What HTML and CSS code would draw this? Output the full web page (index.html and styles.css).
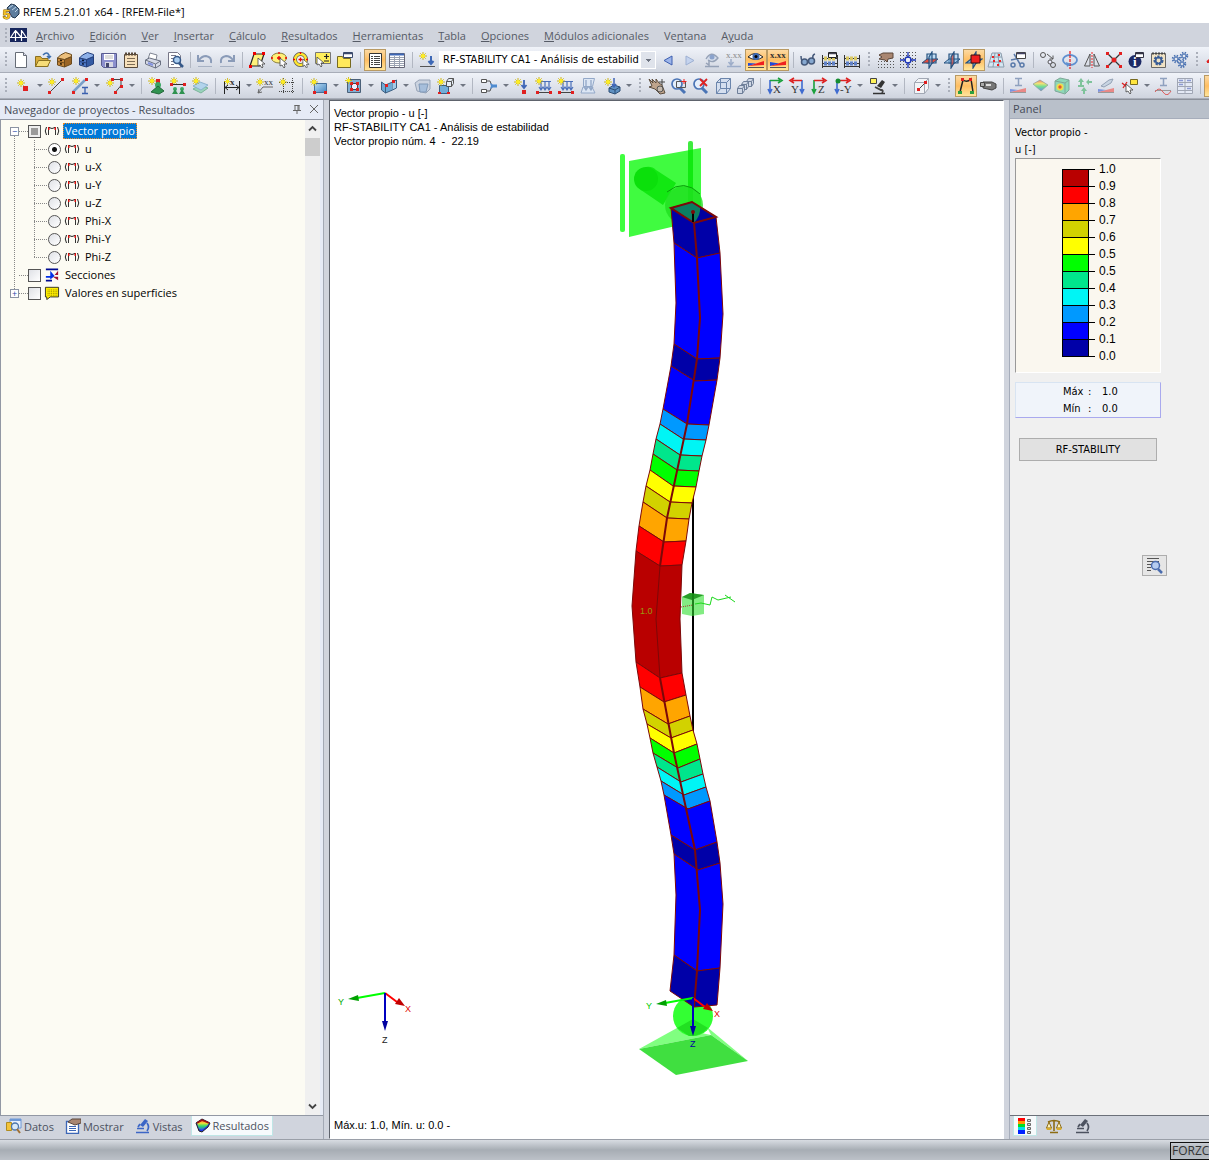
FILE: index.html
```
<!DOCTYPE html>
<html lang="es">
<head>
    <meta charset="UTF-8">
    <title>RFEM 5.21.01 x64 - [RFEM-File*]</title>
    <link rel="stylesheet" href="styles.css">
</head>
<body>

<!-- icon sprite -->
<svg class="sprite" aria-hidden="true">
    <defs>
        <linearGradient id="gBlue" x1="0" y1="0" x2="1" y2="1"><stop offset="0" stop-color="#b9dcf5"/><stop offset="1" stop-color="#4484bd"/></linearGradient>
        <linearGradient id="gRain" x1="0" y1="0" x2="0" y2="1"><stop offset="0" stop-color="#e33"/><stop offset=".3" stop-color="#fd3"/><stop offset=".6" stop-color="#3d6"/><stop offset="1" stop-color="#35e"/></linearGradient>
    </defs>
    <symbol id="star" viewBox="0 0 9 9"><path d="M4.500 0v9M0 4.500h9M1.500 1.500l6 6M7.500 1.500l-6 6" stroke="#c9b000"/><circle cx="4.500" cy="4.500" r="2.300" fill="#ffee20"/></symbol>
    <symbol id="app" viewBox="0 0 18 18"><path d="M5 5l4-4 4 1 4 4v5l-4 4-3-1z" fill="#5d7d9e" stroke="#24384e"/><path d="M7 5l4-3M10 7l4-3M13 9l3-3" stroke="#bcd3e6"/></symbol>
    <symbol id="bridge" viewBox="0 0 17 14"><path d="M0 0h17v14H0z" fill="#17265c"/><path d="M0 9.500h17M5.500 2v11M11.500 2v11M5 3L1 9M6 3l5 6M12 3l4 6" stroke="#fff" stroke-width="1.200" fill="none"/></symbol>
    <symbol id="new" viewBox="0 0 18 18"><path d="M3.500 1.500h8l3 3v12h-11z" fill="#fff" stroke="#666c76"/><path d="M11.500 1.500v3h3" fill="#dde" stroke="#666c76"/></symbol>
    <symbol id="open" viewBox="0 0 18 18"><path d="M1.500 15.500v-10h5l1.500 2h6v8z" fill="#d9ac3a" stroke="#8a7020"/><path d="M1.500 15.500l3-6h12l-3 6z" fill="#f6dc78" stroke="#8a7020"/><path d="M9 4q4-4 6 0v3M13 5l2 2 2-2" fill="none" stroke="#3d6fae" stroke-width="1.500"/></symbol>
    <symbol id="boxA" viewBox="0 0 18 18"><path d="M1.500 7l7 1.500V16l-7-2z" fill="#c98a3c" stroke="#6b4a1c"/><path d="M8.500 8.500l7-3v7.500l-7 3z" fill="#9a6526" stroke="#6b4a1c"/><path d="M1.500 7l3-3 5-2.500 6 2v2l-7 3z" fill="#ecbf7c" stroke="#6b4a1c"/><path d="M1.500 10.500l7 1.500" stroke="#6b4a1c"/><path d="M4 9.200l2 .4M4 12.700l2 .4" stroke="#221505" stroke-width="1.400"/></symbol>
    <symbol id="boxB" viewBox="0 0 18 18"><path d="M1.500 7l7 1.500V16l-7-2z" fill="#4d79c6" stroke="#243f7c"/><path d="M8.500 8.500l7-3v7.500l-7 3z" fill="#345ba4" stroke="#243f7c"/><path d="M1.500 7l3-3 5-2.500 6 2v2l-7 3z" fill="#8db0e8" stroke="#243f7c"/><path d="M1.500 10.500l7 1.500" stroke="#243f7c"/><path d="M4 9.200l2 .4M4 12.700l2 .4" stroke="#0a1430" stroke-width="1.400"/></symbol>
    <symbol id="save" viewBox="0 0 18 18"><path d="M1.500 2.500h15v14h-13l-2-2z" fill="#8c90ce" stroke="#5a5d90"/><path d="M4 3h10v6H4z" fill="#fff"/><path d="M5 5h8M5 7h8" stroke="#bbb"/><path d="M5 11h8v5H5z" fill="#d8d8e4"/><path d="M6 12h3v4H6z" fill="#44486e"/></symbol>
    <symbol id="notes" viewBox="0 0 18 18"><path d="M2.500 3.500h13v13h-13z" fill="#f7e0bb" stroke="#58493a"/><path d="M3 3h12" stroke="#58493a" stroke-width="3" stroke-dasharray="2 1"/><path d="M5 7.500h8M5 10.500h8M5 13.500h8" stroke="#7d6c55"/></symbol>
    <symbol id="print" viewBox="0 0 18 18"><path d="M4 8L6 2l7 2-1 5z" fill="#fff" stroke="#808694"/><path d="M1.500 9l4-2 11 3v4l-5 3-10-4z" fill="#d6dae6" stroke="#6a7182"/><path d="M1.500 9l10 4 5-3M11.500 13v4" fill="none" stroke="#6a7182"/><path d="M4 12l5 2" stroke="#8493e0" stroke-width="2"/></symbol>
    <symbol id="preview" viewBox="0 0 18 18"><path d="M2.500 1.500h9l3 3v12h-12z" fill="#fff" stroke="#778"/><path d="M5 4.500h5M5 7.500h3M5 10.500h2M5 13.500h3" stroke="#778"/><circle cx="11" cy="9" r="3.500" fill="#a9cdf0" stroke="#36598a" stroke-width="1.500"/><path d="M13 12l4 4" stroke="#36598a" stroke-width="2.500"/></symbol>
    <symbol id="undo" viewBox="0 0 18 18"><path d="M2 4v6h6M3 9q3-4 7-4 6 1 5 7" fill="none" stroke="#8a9bb8" stroke-width="2"/><path d="M2 15.500h14" stroke="#a8b2c4"/></symbol>
    <symbol id="redo" viewBox="0 0 18 18"><path d="M16 4v6h-6M15 9q-3-4-7-4-6 1-5 7" fill="none" stroke="#8a9bb8" stroke-width="2"/><path d="M2 15.500h14" stroke="#a8b2c4"/></symbol>
    <symbol id="cursor" viewBox="0 0 9 10"><path d="M1 0v8l2-1 2 3 1-1-1-3h3z" fill="#fff" stroke="#444" stroke-width=".8"/></symbol>
    <symbol id="selRhomb" viewBox="0 0 18 18"><path d="M2 15L6 3h10l-4 12z" fill="#fff27a" stroke="#222" stroke-width="1.200"/><path d="M1 14h3v3H1zM5 1h3v3H5zM14 1h3v3h-3z" fill="#e00"/><use href="#cursor" x="9" y="7" width="9" height="10"/></symbol>
    <symbol id="selEll" viewBox="0 0 18 18"><ellipse cx="9" cy="7" rx="7.500" ry="5" fill="#ffef78" stroke="#8a7f3a"/><path d="M7 7h4M9 5v4M1 7h2M9 1v2M15 7h2" stroke="#e00" stroke-width="1.300"/><use href="#cursor" x="9" y="7" width="9" height="10"/></symbol>
    <symbol id="selRing" viewBox="0 0 18 18"><circle cx="8.500" cy="8.500" r="5.500" fill="#f5f5f5" stroke="#555" stroke-width="4"/><circle cx="8.500" cy="8.500" r="5.500" fill="none" stroke="#ffe630" stroke-width="2.500"/><path d="M6.500 8.500h4M8.500 6.500v4M8.500 1v2M1 8.500h2M14 8.500h2" stroke="#e00" stroke-width="1.300"/><use href="#cursor" x="10" y="8" width="8" height="9"/></symbol>
    <symbol id="selPm" viewBox="0 0 18 18"><path d="M1.500 1.500h15v11h-15z" fill="#ffef5c" stroke="#777"/><path d="M12.500 3v5M10 5.500h5M10 10h5" stroke="#222" stroke-width="1.200"/><use href="#cursor" x="2" y="6" width="9" height="10"/></symbol>
    <symbol id="selTab" viewBox="0 0 18 18"><path d="M1.500 5.500h5l1 2h7v9h-13z" fill="#ffe95c" stroke="#776a20"/><path d="M7.500 1.500h9v5h-9z" fill="#fff" stroke="#3b4a6c"/><path d="M8 2.500h8" stroke="#3b4a6c" stroke-width="1.500"/></symbol>
    <symbol id="list" viewBox="0 0 18 18"><path d="M3.500 2.500h12v14h-12z" fill="#fff" stroke="#333"/><path d="M5 5.500h2M5 7.500h2M5 9.500h2M5 11.500h2M5 13.500h2M8 5.500h6M8 7.500h6M8 9.500h6M8 11.500h6M8 13.500h6" stroke="#444"/></symbol>
    <symbol id="table" viewBox="0 0 18 18"><path d="M1.500 2.500h15v14h-15z" fill="#fff" stroke="#667"/><path d="M2 3.500h14" stroke="#3c66b6" stroke-width="2"/><path d="M2 6.500h14M2 8.500h14M2 10.500h14M2 12.500h14M2 14.500h14M6.500 5v11M11.500 5v11" stroke="#9aa2b2"/></symbol>
    <symbol id="loadcase" viewBox="0 0 18 18"><use href="#star" x="1" y="1" width="8" height="8"/><path d="M13 5v7M10.500 10l2.500 3 2.500-3" fill="none" stroke="#3d68b6" stroke-width="2"/><path d="M2 15.500h15" stroke="#555"/></symbol>
    <symbol id="prev" viewBox="0 0 18 18"><path d="M13 5v9L5 9.500z" fill="#9db5ea" stroke="#3d5fb0"/></symbol>
    <symbol id="next" viewBox="0 0 18 18"><path d="M5 5v9l8-4.500z" fill="#c4d3ee" stroke="#9db0d2"/></symbol>
    <symbol id="eyeGrey" viewBox="0 0 18 18"><path d="M3 8q5-9 12-1-5 6-10 2" fill="#d4dcea" stroke="#95a1b6" stroke-width="1.300"/><circle cx="9" cy="6" r="2.500" fill="#8aa2cc"/><path d="M6 9v5l-3-2M2 15.500h14" fill="none" stroke="#95a1b6" stroke-width="1.500"/></symbol>
    <symbol id="xxxGrey" viewBox="0 0 18 18"><path d="M6 8v6M3.500 11L6 14l2.500-3M2 15.500h14" fill="none" stroke="#9dadc9" stroke-width="1.500"/></symbol>
    <symbol id="eye" viewBox="0 0 18 18"><path d="M1 6q7-7 15 0-7 5-15 0z" fill="#fff" stroke="#222"/><circle cx="9" cy="5.500" r="3.500" fill="#3e69b1"/><circle cx="9" cy="5.500" r="1.500"/><path d="M1 15l16-5v4z" fill="#ef2020"/><path d="M1 12v3l8-2.500z" fill="#1f49d8"/><path d="M1 16.500h16" stroke="#555"/></symbol>
    <symbol id="xxx" viewBox="0 0 18 18"><path d="M1 15l16-5v4z" fill="#ef2020"/><path d="M1 11v4l9-2.500z" fill="#1f49d8"/><path d="M1 16.500h16" stroke="#555"/></symbol>
    <symbol id="glasses" viewBox="0 0 18 18"><path d="M2 5q0 3 1 5M16 3q-3 1-2 5" stroke="#45597a" stroke-width="1.500" fill="none"/><circle cx="5.500" cy="11" r="3" fill="#86a8d0" stroke="#45597a" stroke-width="1.500"/><circle cx="12.500" cy="10" r="3" fill="#86a8d0" stroke="#45597a" stroke-width="1.500"/></symbol>
    <symbol id="abacus" viewBox="0 0 18 18"><path d="M1.500 4v13M16.500 4v13M1 7.500h16M1 12.500h16M1 15.500h16" stroke="#333"/><path d="M3 7.500h12" stroke="#d9c862" stroke-width="4" stroke-dasharray="3 1"/><path d="M3 12.500h12" stroke="#5f80c6" stroke-width="4" stroke-dasharray="3 1"/></symbol>
    <symbol id="abacusWin" viewBox="0 0 18 18"><use href="#abacus" width="18" height="18"/><path d="M7.500 1.500h8v5h-8z" fill="#fff" stroke="#222"/><path d="M8 2.500h7" stroke="#445" stroke-width="1.500"/></symbol>
    <symbol id="handGrid" viewBox="0 0 18 18"><path d="M1 10.500h16M1 13.500h16M1 16.500h16" stroke="#555" stroke-dasharray="1 2"/><path d="M2 4l4-2h10v5l-5 1-1 3-2-2-6-1 3-2z" fill="#a98671" stroke="#5b473b"/></symbol>
    <symbol id="snap" viewBox="0 0 18 18"><path d="M1 1.500h16M1 4.500h16M1 7.500h16M1 10.500h16M1 13.500h16M1 16.500h16" stroke="#555" stroke-dasharray="1 2"/><circle cx="9" cy="9" r="3" fill="#eef1f8" stroke="#1c35b6" stroke-width="1.300"/><path d="M9 1v6M9 11v6M1 9h6M11 9h6" stroke="#1c35b6" stroke-width="1.300"/></symbol>
    <symbol id="planeXY" viewBox="0 0 18 18"><path d="M6 3h9v9H6z" fill="#c2dcf2" stroke="#25517f" stroke-width="1.200"/><path d="M1 12l5-4h11l-5 4z" fill="#e34b3c" stroke="#25517f"/><path d="M8 6l3-5v11l-3 5z" fill="#81b8e2" fill-opacity=".5" stroke="#25517f" stroke-width="1.200"/></symbol>
    <symbol id="planeYZ" viewBox="0 0 18 18"><path d="M6 3h9v9H6z" fill="#c2dcf2" stroke="#25517f" stroke-width="1.200"/><path d="M1 12l5-4h11l-5 4z" fill="#81b8e2" fill-opacity=".6" stroke="#25517f"/><path d="M8 6l3-5v11l-3 5z" fill="#c8534e" fill-opacity=".8" stroke="#25517f" stroke-width="1.200"/></symbol>
    <symbol id="planeXZ" viewBox="0 0 18 18"><path d="M1 12l5-4h11l-5 4z" fill="#81b8e2" stroke="#25517f" stroke-width="1.200"/><path d="M8 6l3-5v11l-3 5z" fill="#81b8e2" stroke="#25517f" stroke-width="1.200"/><path d="M6 4h9v8H6z" fill="#ef2020" stroke="#311"/></symbol>
    <symbol id="gridPts" viewBox="0 0 18 18"><path d="M5 2h9l3 14H1z" fill="#d5e7f3" stroke="#8b9cac"/><path d="M4 6h11M3 11h13M8 2L6 16M11 2l1 14" stroke="#8b9cac"/><path d="M5 5h2v2H5zM11 3h2v2h-2zM6 9h2v2H6zM12 9h2v2h-2zM10 13h2v2h-2z" fill="#e22"/></symbol>
    <symbol id="scissors" viewBox="0 0 18 18"><path d="M5 3l6 10M2 9l10-2" stroke="#5a7aaa" stroke-width="1.500"/><circle cx="4" cy="14" r="2" fill="none" stroke="#5a7aaa" stroke-width="1.500"/><circle cx="13" cy="14" r="2" fill="none" stroke="#5a7aaa" stroke-width="1.500"/><path d="M7.500 1.500h9v6h-9z" fill="#fff" stroke="#444"/><path d="M8 2.500h8" stroke="#446" stroke-width="1.500"/></symbol>
    <symbol id="copyMove" viewBox="0 0 18 18"><circle cx="4" cy="4" r="2.500" fill="none" stroke="#555"/><circle cx="14" cy="14" r="2.500" fill="none" stroke="#555"/><path d="M8 3l6 5M10.500 8H14V4.500" fill="none" stroke="#555"/><circle cx="11" cy="11" r="2" fill="#eef" stroke="#555"/></symbol>
    <symbol id="rotate" viewBox="0 0 18 18"><ellipse cx="9" cy="9" rx="7" ry="5" fill="none" stroke="#5f90d0" stroke-width="1.800"/><path d="M9 0v18" stroke="#e22" stroke-width="1.300" stroke-dasharray="3 1"/><path d="M5 11l1 5 4-3z" fill="#5f90d0"/></symbol>
    <symbol id="mirror" viewBox="0 0 18 18"><path d="M7 3v12H1.500zM11 3v12h5.500z" fill="none" stroke="#555"/><path d="M9 1v16" stroke="#e22" stroke-dasharray="2 1"/></symbol>
    <symbol id="cross" viewBox="0 0 18 18"><path d="M2 2l14 14M16 2L2 16" stroke="#333" stroke-width="1.300"/><path d="M1 1h3v3H1zM14 1h3v3h-3zM1 14h3v3H1zM14 14h3v3h-3z" fill="#e32020"/><circle cx="9" cy="9" r="2.500" fill="#e32020"/></symbol>
    <symbol id="info" viewBox="0 0 18 18"><circle cx="8" cy="10.500" r="6.500" fill="#1d2a66"/><path d="M8.500 1.500h8v5h-8z" fill="#fff" stroke="#334"/><path d="M9 2.500h7" stroke="#334" stroke-width="1.500"/></symbol>
    <symbol id="doc" viewBox="0 0 18 18"><path d="M2.500 2.500h14v14h-14z" fill="#f0e2c4" stroke="#666"/><path d="M3 2.500h13" stroke="#444" stroke-width="2" stroke-dasharray="2 1"/><circle cx="9.500" cy="9.500" r="3.500" fill="none" stroke="#385c96" stroke-width="3" stroke-dasharray="2 1"/><circle cx="9.500" cy="9.500" r="3" fill="none" stroke="#385c96" stroke-width="1.500"/></symbol>
    <symbol id="gears" viewBox="0 0 18 18"><g fill="none" stroke="#4a72b2"><g stroke-width="2.500" stroke-dasharray="1.200 1.200"><circle cx="5" cy="8" r="3"/><circle cx="13" cy="5" r="3"/><circle cx="11" cy="13" r="3"/></g><circle cx="5" cy="8" r="2"/><circle cx="13" cy="5" r="2"/><circle cx="11" cy="13" r="2"/></g></symbol>
    <symbol id="redArrow" viewBox="0 0 18 18"><path d="M2 11L10 4M2 11h6" stroke="#d22" stroke-width="2"/></symbol>

    <symbol id="node" viewBox="0 0 18 18"><use href="#star" x="3" y="2" width="8" height="8"/><path d="M9 9h5v5H9z" fill="#e02020"/></symbol>
    <symbol id="line" viewBox="0 0 18 18"><use href="#star" x="1" y="1" width="8" height="8"/><path d="M3 15L15 3" stroke="#444"/><path d="M1 14h3v3H1zM14 1h3v3h-3z" fill="#e02020"/></symbol>
    <symbol id="member" viewBox="0 0 18 18"><use href="#star" x="1" y="0" width="8" height="8"/><path d="M2 15L14 3" stroke="#7b9fc8" stroke-width="2.500"/><path d="M14 1h3v3h-3zM1 14h3v3H1z" fill="#e02020"/><path d="M11 10.500h6M11 16.500h6M14 10v7" stroke="#3a5fae" stroke-width="1.300"/></symbol>
    <symbol id="polyline" viewBox="0 0 18 18"><use href="#star" x="0" y="2" width="8" height="8"/><path d="M7 2.500h8v6l-5 6" fill="none" stroke="#444"/><path d="M5 1h3v3H5zM14 1h3v3h-3zM14 8h3v3h-3zM8 14h3v3H8z" fill="#e02020"/></symbol>
    <symbol id="support" viewBox="0 0 18 18"><use href="#star" x="1" y="0" width="8" height="8"/><path d="M9 2h4v4H9z" fill="#e02020"/><circle cx="11" cy="8" r="3" fill="#3aa864"/><path d="M11 9l6 5-5 3-8-2z" fill="#2f9250" stroke="#23683a"/></symbol>
    <symbol id="lineSupport" viewBox="0 0 18 18"><use href="#star" x="1" y="0" width="8" height="8"/><path d="M2 7.500h14" stroke="#333"/><path d="M1 6h3v3H1zM14 6h3v3h-3z" fill="#e02020"/><circle cx="6" cy="12" r="2" fill="#3aa864"/><circle cx="13" cy="12" r="2" fill="#3aa864"/><path d="M6 12l3 5H3zM13 12l3 5h-6z" fill="#2f9250"/></symbol>
    <symbol id="surfSupport" viewBox="0 0 18 18"><path d="M2 12l7-4 8 3-7 5z" fill="#9ad4ba" stroke="#7cb49c"/><path d="M2 9l7-4 8 3-7 5z" fill="#b2d4ec" stroke="#8cb2cd"/><use href="#star" x="1" y="0" width="8" height="8"/></symbol>
    <symbol id="dim" viewBox="0 0 18 18"><path d="M1.500 4v13M16.500 4v13M2 10.500h14M5 8l-3 2.500L5 13M13 8l3 2.500-3 2.500" fill="none" stroke="#222"/><use href="#star" x="1" y="1" width="7" height="7"/></symbol>
    <symbol id="comment" viewBox="0 0 18 18"><path d="M2 16l5-6h10M2 16l1-4M2 16l4-1" fill="none" stroke="#666"/><use href="#star" x="0" y="1" width="8" height="8"/></symbol>
    <symbol id="section" viewBox="0 0 18 18"><path d="M5.500 1v16M14.500 1v16M1 5.500h16M1 14.500h16" stroke="#444" stroke-dasharray="1 1"/><use href="#star" x="1" y="1" width="8" height="8"/></symbol>
    <symbol id="surface" viewBox="0 0 18 18"><path d="M4.500 6.500h12v9h-12z" fill="url(#gBlue)" stroke="#456f9b"/><use href="#star" x="0" y="1" width="8" height="8"/><path d="M3 14h3v3H3zM14 14h3v3h-3z" fill="#e02020"/></symbol>
    <symbol id="opening" viewBox="0 0 18 18"><path d="M2.500 2.500h13v13h-13z" fill="#84aed2" stroke="#4a6078"/><path d="M6.500 6.500h6v6h-6z" fill="#eef" stroke="#445"/><path d="M5 5h3v3H5zM11 5h3v3h-3zM5 11h3v3H5zM11 11h3v3h-3z" fill="#e02020"/><use href="#star" x="0" y="0" width="7" height="7"/></symbol>
    <symbol id="solid" viewBox="0 0 18 18"><path d="M1.500 5l4 3v8l-4-3zM5.500 8l7-3v8l-7 3z" fill="#6fa9d4" stroke="#3c5f82"/><path d="M12.500 5l4-2v8l-4 2" fill="#a4cbe8" stroke="#3c5f82"/><path d="M5 7h3v3H5zM12 3h3v3h-3z" fill="#e02020"/></symbol>
    <symbol id="solid2" viewBox="0 0 18 18"><path d="M2 6l4-3h11v9l-4 4-9-2z" fill="#cbd3e0" stroke="#97a3b6"/><path d="M6 7h9l-2 8H7z" fill="#a6bedb" stroke="#8099b8"/></symbol>
    <symbol id="solidSet" viewBox="0 0 18 18"><path d="M2.500 8.500h9v8h-9z" fill="#74add8" stroke="#3c5f82"/><path d="M9.500 4.500h5v5h-5zM9.500 4.500l2-3h5v5l-2 3M14.500 4.500l2-3" fill="#e6edf5" stroke="#555"/><use href="#star" x="0" y="1" width="8" height="8"/><path d="M1 15h3v2H1zM10 15h3v2h-3z" fill="#e02020"/></symbol>
    <symbol id="connect" viewBox="0 0 18 18"><path d="M1.500 2.500h5v3h-5zM1.500 12.500h5v3h-5z" fill="#fff" stroke="#555"/><path d="M7 4h3l2 5-2 5H7" fill="none" stroke="#555"/><path d="M10 6l3 1.500h4v3h-4L10 12l1-3z" fill="#4f8bd0"/></symbol>
    <symbol id="nodeLoad" viewBox="0 0 18 18"><use href="#star" x="1" y="1" width="8" height="8"/><path d="M11 3v8M8.500 8L11 11l2.500-3" fill="none" stroke="#3f66b6" stroke-width="1.800"/><path d="M9 13h4v4H9z" fill="#e02020"/></symbol>
    <symbol id="lineLoad" viewBox="0 0 18 18"><path d="M3 4.500h13M6 5v8M10 5v8M14 5v8M4 10l2 3 2-3 2 3 2-3 2 3 2-3" fill="none" stroke="#4a6fba" stroke-width="1.200"/><path d="M2 15.500h14" stroke="#444"/><path d="M1 14h3v3H1zM14 14h3v3h-3z" fill="#e02020"/><use href="#star" x="0" y="0" width="8" height="8"/></symbol>
    <symbol id="freeLoad" viewBox="0 0 18 18"><path d="M4.500 1.500h11l-2 8h-9zM4 10h9l3 6H2z" fill="#dce6f4" stroke="#93a8c8"/><path d="M7 3v9M12 3v9M5 10l2 3 2-3M10 10l2 3 2-3" fill="none" stroke="#93a8c8" stroke-width="1.300"/></symbol>
    <symbol id="genLoad" viewBox="0 0 18 18"><path d="M6 11l5-3 6 2v4l-5 3-6-2z" fill="#5f91c2" stroke="#2d4f76"/><path d="M6 11l6 2 5-3M12 13v4" stroke="#2d4f76" fill="none"/><path d="M11 1v8M9 7l2 3 2-3" fill="none" stroke="#3f66b6" stroke-width="1.500"/><use href="#star" x="1" y="1" width="8" height="8"/></symbol>
    <symbol id="pan" viewBox="0 0 18 18"><path d="M1 2l4 4-1-4 4 4V2l3 4 3 2 3 8-5 1-5-5-6-2 3-1z" fill="#bfa48c" stroke="#5c4d3e"/><path d="M14 2v6M11 5h6" stroke="#444"/><circle cx="12" cy="12" r="3" fill="#ccc" fill-opacity=".5" stroke="#555"/></symbol>
    <symbol id="zoomWin" viewBox="0 0 18 18"><circle cx="7" cy="7" r="5" fill="#e4eefa" stroke="#4a74b5" stroke-width="1.700"/><path d="M10 11l5 5" stroke="#4a74b5" stroke-width="3"/><path d="M6.500 4.500h9v6h-9z" fill="none" stroke="#555"/><path d="M14 2v5M11.500 4.500h5" stroke="#e22"/></symbol>
    <symbol id="zoomAll" viewBox="0 0 18 18"><circle cx="7" cy="7" r="5" fill="#e4eefa" stroke="#4a74b5" stroke-width="1.700"/><path d="M10 11l5 5" stroke="#4a74b5" stroke-width="3"/><path d="M8 2l7 7M15 2L8 9" stroke="#d22" stroke-width="1.800"/></symbol>
    <symbol id="cube" viewBox="0 0 18 18"><path d="M2.500 5.500l4-4h10v10l-4 5h-10z" fill="#d5dfef"/><path d="M2.500 5.500h10v11h-10zM2.500 5.500l4-4h10l-4 4M16.500 1.500v10l-4 5M6.500 1.500v10h10M6.500 11.500l-4 5" fill="none" stroke="#6b85ac"/></symbol>
    <symbol id="cubes" viewBox="0 0 18 18"><g id="box3" fill="#cfd7e5" stroke="#6f7f99"><path d="M10.500 4.500l2-3h5v5l-2 3z"/><path d="M10.500 4.500h5v5h-5zM15.500 4.500l2-3"/></g><use href="#box3" x="-5" y="3"/><use href="#box3" x="-9" y="7"/></symbol>
    <symbol id="viewX" viewBox="0 0 18 18"><path d="M4 3v12M2 12l2 4 2-4" stroke="#3f6bd0" stroke-width="1.600" fill="none"/><path d="M4 3.500h10M12 1l4 2.500L12 6" stroke="#1ba03c" stroke-width="1.600" fill="none"/></symbol>
    <symbol id="viewY" viewBox="0 0 18 18"><path d="M14 3v12M12 12l2 4 2-4" stroke="#3f6bd0" stroke-width="1.600" fill="none"/><path d="M14 3.500H4M6 1L2 3.500 6 6" stroke="#d22" stroke-width="1.600" fill="none"/></symbol>
    <symbol id="viewZ" viewBox="0 0 18 18"><path d="M4 3v12M2 12l2 4 2-4" stroke="#1ba03c" stroke-width="1.600" fill="none"/><path d="M4 3.500h10M12 1l4 2.500L12 6" stroke="#d22" stroke-width="1.600" fill="none"/></symbol>
    <symbol id="viewMY" viewBox="0 0 18 18"><path d="M3 3v12M1 12l2 4 2-4" stroke="#3f6bd0" stroke-width="1.600" fill="none"/><path d="M4 3.500h10M12 1l4 2.500L12 6" stroke="#d22" stroke-width="1.600" fill="none"/><circle cx="4" cy="4" r="2.500" fill="#168d32"/></symbol>
    <symbol id="scope" viewBox="0 0 18 18"><path d="M13 3l3 2-4 6-4-2z" fill="#333"/><path d="M6 10l6 3q3 0 1 3" fill="none" stroke="#444" stroke-width="1.800"/><path d="M4 16.500h12" stroke="#333" stroke-width="1.500"/><path d="M1.500 1.500h6v5h-6z" fill="#fff35a" stroke="#444"/></symbol>
    <symbol id="clip" viewBox="0 0 18 18"><path d="M2.500 5.500l4-4h10v10l-4 5h-10z" fill="#f2f4f7" stroke="#a2a8b4"/><path d="M2.500 5.500h10v11M12.500 5.500l4-4" stroke="#a2a8b4" fill="none"/><path d="M6 13l8-8" stroke="#444"/><path d="M5 11h3v3H5zM12 4h3v3h-3z" fill="#e02020"/></symbol>
    <symbol id="frame" viewBox="0 0 18 18"><path d="M3 15L6 3q4 3 8-1l2 13" fill="none" stroke="#222" stroke-width="1.500"/><path d="M4 1h3v3H4zM12 1h3v3h-3z" fill="#e02020"/><path d="M1 14h4v3H1zM13 14h4v3h-4z" fill="#2ca042"/></symbol>
    <symbol id="camera" viewBox="0 0 18 18"><path d="M4 5h9l4 2v4l-4 2-9-2z" fill="#777" stroke="#444"/><path d="M1.500 5.500h4v4h-4z" fill="#aaa" stroke="#444"/><path d="M7 8h5" stroke="#ddd" stroke-width="2"/></symbol>
    <symbol id="resI" viewBox="0 0 18 18"><path d="M6 1.500h7M6 8.500h7M9.500 2v6" stroke="#8fa1bf" stroke-width="1.500"/><path d="M1 15l16-4v4z" fill="#e98987"/><path d="M1 12v3l8-2z" fill="#7b93df"/><path d="M1 15.500h16" stroke="#999"/></symbol>
    <symbol id="resSurf" viewBox="0 0 18 18"><path d="M2 7l7-4 8 5-7 6z" fill="url(#gRain)" fill-opacity=".65" stroke="#8a9f9a" stroke-width=".7"/></symbol>
    <symbol id="resSolid" viewBox="0 0 18 18"><path d="M2 4l5-3 9 2v10l-4 4-10-3z" fill="#8dd8b8" stroke="#7fa898"/><path d="M2 4l10 2v10M12 6l4-3" stroke="#7fa898" fill="none"/><circle cx="7" cy="10" r="3.500" fill="#f1dc4c"/><circle cx="7" cy="10" r="1.700" fill="#e4572f"/></symbol>
    <symbol id="resSup" viewBox="0 0 18 18"><path d="M6 1l3 4H7v3H5V5H3zM11 5l3-3v2h3v2h-3v2zM9 10l3 4h-2v3H8v-3H6z" fill="#7fc39b"/><path d="M3 9h6" stroke="#7fc39b" stroke-width="2"/></symbol>
    <symbol id="resPlane" viewBox="0 0 18 18"><path d="M4 9l8-6 4-1-2 4-7 4z" fill="#c8d4e2" stroke="#94a2b5"/><path d="M1 15l16-4v4z" fill="#e98987"/><path d="M1 12v3l8-2z" fill="#7b93df"/><path d="M1 15.500h16" stroke="#999"/></symbol>
    <symbol id="pick" viewBox="0 0 18 18"><path d="M9.500 2.500h7v5h-7z" fill="#ffe53d" stroke="#776a20"/><path d="M1 6l5 4M6 5l-4 6" stroke="#d22" stroke-width="1.300"/><use href="#cursor" x="4" y="7" width="9" height="10"/></symbol>
    <symbol id="wave" viewBox="0 0 18 18"><path d="M6 1.500h7M6 8.500h7M9.500 2v6" stroke="#8fa1bf" stroke-width="1.500"/><path d="M1 13.500h16" stroke="#999"/><path d="M1 15q4-6 8 0t8-1" fill="none" stroke="#dd5e5e"/></symbol>
    <symbol id="resTab" viewBox="0 0 18 18"><path d="M1.500 1.500h15v15h-15z" fill="#e4e9f5" stroke="#a0a6b4"/><path d="M2 5.500h14M2 9.500h14M2 13.500h14M9 1v15" stroke="#a0a6b4"/><path d="M3 3.500h4M11 3.500h4M3 7.500h4M11 11.500h4" stroke="#8c9ad2" stroke-width="1.500"/></symbol>

    <symbol id="mode" viewBox="0 0 16 12"><path d="M2.500 2Q0 6 2.500 10M13.500 2Q16 6 13.500 10" fill="none" stroke="#222"/><path d="M4.500 10V3M11.500 10V3" stroke="#333"/><path d="M4 2h1.500v3H4zM10.500 2H12v3h-1.500z" fill="#e01010"/><path d="M5 2.500l3 1 3-1" fill="none" stroke="#222"/></symbol>
    <symbol id="secc" viewBox="0 0 16 16"><path d="M1 1.500h14M1 14.500h7" stroke="#000a90" stroke-width="2"/><path d="M6 3v10l5-4zM1 9h5v2H1z" fill="#0030e8"/><path d="M15 3v5h-4zM9 10h6v4z" fill="#a01030"/></symbol>
    <symbol id="vals" viewBox="0 0 16 16"><path d="M.5 1.500h15v11H6l-4 3v-3H.5z" fill="#ffef00" stroke="#222"/><path d="M3 4.500h11M3 6.500h11M3 8.500h11M3 10.500h11" stroke="#8a7b00" stroke-dasharray="1 1"/></symbol>
    <symbol id="tabData" viewBox="0 0 16 16"><path d="M4 1h11v9H4z" fill="#e8f0fb" stroke="#6d98d6"/><path d="M4 2h11" stroke="#6d98d6" stroke-width="2"/><path d="M.5 4.500h5v8h-5z" fill="#f3c33a" stroke="#b08c20"/><circle cx="9" cy="8.500" r="3.500" fill="#d8e9f8" stroke="#4b76ad" stroke-width="1.300"/><path d="M11 11l3 4" stroke="#a07035" stroke-width="2"/></symbol>
    <symbol id="tabShow" viewBox="0 0 16 16"><path d="M1.500 3.500h12v12h-12z" fill="#fff" stroke="#3c66b6" stroke-width="1.300"/><path d="M4 8.500h7M4 10.500h7M4 12.500h7" stroke="#3c66b6"/><path d="M3 4l4-3h9v4l-6 2z" fill="#a98671" stroke="#5b473b"/></symbol>
    <symbol id="micro" viewBox="0 0 16 16"><path d="M10 1l3 2-5 6-3-2z" fill="currentColor"/><path d="M5 6L3 9M12 5q3 4 0 8M2 10.500h7M1 14.500h13" fill="none" stroke="currentColor" stroke-width="1.700"/></symbol>
    <symbol id="tabRes" viewBox="0 0 16 16"><path d="M1 5l6-4 8 4-2 4-6 5-3-1z" fill="#2038e0" stroke="#222"/><path d="M2 5l5-3 7 3-2 3-5 4-3-1z" fill="url(#gRain)"/><path d="M2 5l5-3 7 3" fill="none" stroke="#a01010" stroke-width="1.500"/></symbol>
    <symbol id="colors" viewBox="0 0 16 16"><path d="M1 0h7v3H1z" fill="#f00"/><path d="M1 3h7v3H1z" fill="#f90"/><path d="M1 6h7v3H1z" fill="#0d2"/><path d="M1 9h7v3H1z" fill="#0de"/><path d="M1 12h7v4H1z" fill="#02f"/><path d="M10.500 1.500h3v2h-3zM10.500 5.500h3v2h-3zM10.500 9.500h3v2h-3zM10.500 13.500h3v2h-3z" fill="#ddd" stroke="#666"/></symbol>
    <symbol id="scale" viewBox="0 0 16 16"><path d="M8 2v11M2 4q6-3 12 0M4 14.500h8" fill="none" stroke="#8d6c14" stroke-width="1.600"/><path d="M3 4L.5 10h5zM13 4l-2.500 6h5z" fill="#fff3bf" stroke="#8d6c14"/><path d="M0 10h6l-1 2H1zM10 10h6l-1 2h-4z" fill="#d8ac2d"/></symbol>
    <symbol id="find" viewBox="0 0 18 18"><path d="M1 1.500h12M1 4.500h12M1 7.500h5M1 10.500h4M1 13.500h4" stroke="#555"/><circle cx="9.500" cy="8.500" r="4" fill="#b6cdf0" stroke="#4a6cae" stroke-width="1.500"/><path d="M12 12l4 4" stroke="#4a6cae" stroke-width="2.500"/></symbol>
</svg>

<header class="title-bar">
    <svg class="icon"><use href="#app"/><text x="1" y="16" class="logo">5</text></svg>
    <span>RFEM 5.21.01 x64 - [RFEM-File*]</span>
</header>

<nav class="menu-bar">
    <span class="grip"></span>
    <svg class="bridge"><use href="#bridge"/></svg>
    <a href="#"><u>A</u>rchivo</a>
    <a href="#"><u>E</u>dición</a>
    <a href="#"><u>V</u>er</a>
    <a href="#"><u>I</u>nsertar</a>
    <a href="#"><u>C</u>álculo</a>
    <a href="#"><u>R</u>esultados</a>
    <a href="#"><u>H</u>erramientas</a>
    <a href="#"><u>T</u>abla</a>
    <a href="#"><u>O</u>pciones</a>
    <a href="#"><u>M</u>ódulos adicionales</a>
    <a href="#">Ve<u>n</u>tana</a>
    <a href="#">A<u>y</u>uda</a>
</nav>

<div class="toolbar">
    <span class="grip"></span>
    <button aria-label="Nuevo"><svg class="icon"><use href="#new"/></svg></button>
    <button aria-label="Abrir"><svg class="icon"><use href="#open"/></svg></button>
    <button aria-label="Proyectos"><svg class="icon"><use href="#boxA"/></svg></button>
    <button aria-label="Bloques"><svg class="icon"><use href="#boxB"/></svg></button>
    <button aria-label="Guardar"><svg class="icon"><use href="#save"/></svg></button>
    <button aria-label="Informe"><svg class="icon"><use href="#notes"/></svg></button>
    <button aria-label="Imprimir"><svg class="icon"><use href="#print"/></svg></button>
    <button aria-label="Vista previa"><svg class="icon"><use href="#preview"/></svg></button>
    <span class="sep"></span>
    <button aria-label="Deshacer"><svg class="icon"><use href="#undo"/></svg></button>
    <button aria-label="Rehacer"><svg class="icon"><use href="#redo"/></svg></button>
    <span class="sep"></span>
    <button aria-label="Selección por rombo"><svg class="icon"><use href="#selRhomb"/></svg></button>
    <button aria-label="Selección por elipse"><svg class="icon"><use href="#selEll"/></svg></button>
    <button aria-label="Selección por anillo"><svg class="icon"><use href="#selRing"/></svg></button>
    <button aria-label="Añadir a selección"><svg class="icon"><use href="#selPm"/></svg></button>
    <button aria-label="Selección especial"><svg class="icon"><use href="#selTab"/></svg></button>
    <span class="sep"></span>
    <button class="active" aria-label="Navegador"><svg class="icon"><use href="#list"/></svg></button>
    <button aria-label="Tablas"><svg class="icon"><use href="#table"/></svg></button>
    <span class="sep"></span>
    <button aria-label="Nuevo caso de carga"><svg class="icon"><use href="#loadcase"/></svg></button>
    <select class="case" aria-label="Caso de carga">
        <option>RF-STABILITY CA1 - Análisis de estabilidad</option>
    </select>
    <button aria-label="Anterior"><svg class="icon"><use href="#prev"/></svg></button>
    <button aria-label="Siguiente"><svg class="icon"><use href="#next"/></svg></button>
    <button aria-label="Ver cargas"><svg class="icon"><use href="#eyeGrey"/></svg></button>
    <button aria-label="Valores de carga"><svg class="icon"><use href="#xxxGrey"/><text x="1" y="7" class="glyph pale">x.xx</text></svg></button>
    <button class="active" aria-label="Ver resultados"><svg class="icon"><use href="#eye"/></svg></button>
    <button class="active" aria-label="Ver valores"><svg class="icon"><use href="#xxx"/><text x="1" y="7" class="glyph bold">x.xx</text></svg></button>
    <span class="sep"></span>
    <button aria-label="Gafas"><svg class="icon"><use href="#glasses"/></svg></button>
    <button aria-label="Calcular seleccionados"><svg class="icon"><use href="#abacusWin"/></svg></button>
    <button aria-label="Calcular todo"><svg class="icon"><use href="#abacus"/></svg></button>
    <span class="grip wide"></span>
    <button aria-label="Cuadrícula"><svg class="icon"><use href="#handGrid"/></svg></button>
    <button aria-label="Forzado"><svg class="icon"><use href="#snap"/></svg></button>
    <button aria-label="Plano XY"><svg class="icon"><use href="#planeXY"/></svg></button>
    <button aria-label="Plano YZ"><svg class="icon"><use href="#planeYZ"/></svg></button>
    <button class="active" aria-label="Plano XZ"><svg class="icon"><use href="#planeXZ"/></svg></button>
    <button aria-label="Puntos de cuadrícula"><svg class="icon"><use href="#gridPts"/></svg></button>
    <button aria-label="Recortar"><svg class="icon"><use href="#scissors"/></svg></button>
    <span class="sep"></span>
    <button aria-label="Mover y copiar"><svg class="icon"><use href="#copyMove"/></svg></button>
    <button aria-label="Girar"><svg class="icon"><use href="#rotate"/></svg></button>
    <button aria-label="Simetría"><svg class="icon"><use href="#mirror"/></svg></button>
    <button aria-label="Conectar líneas"><svg class="icon"><use href="#cross"/></svg></button>
    <button aria-label="Información"><svg class="icon"><use href="#info"/><text x="6" y="15" class="glyph info">i</text></svg></button>
    <button aria-label="Documento"><svg class="icon"><use href="#doc"/></svg></button>
    <button aria-label="Ajustes"><svg class="icon"><use href="#gears"/></svg></button>
    <span class="grip wide"></span>
    <button aria-label="Vector"><svg class="icon"><use href="#redArrow"/></svg></button>
</div>

<div class="toolbar">
    <span class="grip"></span>
    <button class="split" aria-label="Nudo"><svg class="icon"><use href="#node"/></svg></button>
    <button aria-label="Línea"><svg class="icon"><use href="#line"/></svg></button>
    <button class="split" aria-label="Barra"><svg class="icon"><use href="#member"/></svg></button>
    <button class="split" aria-label="Polilínea"><svg class="icon"><use href="#polyline"/></svg></button>
    <span class="sep"></span>
    <button aria-label="Apoyo en nudo"><svg class="icon"><use href="#support"/></svg></button>
    <button aria-label="Apoyo en línea"><svg class="icon"><use href="#lineSupport"/></svg></button>
    <button aria-label="Apoyo en superficie"><svg class="icon"><use href="#surfSupport"/></svg></button>
    <span class="sep"></span>
    <button class="split" aria-label="Cota"><svg class="icon"><use href="#dim"/><text x="7" y="8" class="glyph bold">x</text></svg></button>
    <button aria-label="Comentario"><svg class="icon"><use href="#comment"/><text x="8" y="8" class="glyph">xx</text></svg></button>
    <button aria-label="Sección"><svg class="icon"><use href="#section"/></svg></button>
    <span class="sep"></span>
    <button class="split" aria-label="Superficie"><svg class="icon"><use href="#surface"/></svg></button>
    <button class="split" aria-label="Abertura"><svg class="icon"><use href="#opening"/></svg></button>
    <button class="split" aria-label="Sólido"><svg class="icon"><use href="#solid"/></svg></button>
    <button aria-label="Sólido de contacto"><svg class="icon"><use href="#solid2"/></svg></button>
    <button class="split" aria-label="Conjunto de sólidos"><svg class="icon"><use href="#solidSet"/></svg></button>
    <span class="sep"></span>
    <button class="split" aria-label="Conexión"><svg class="icon"><use href="#connect"/></svg></button>
    <button aria-label="Carga en nudo"><svg class="icon"><use href="#nodeLoad"/></svg></button>
    <button aria-label="Carga en barra"><svg class="icon"><use href="#lineLoad"/></svg></button>
    <button aria-label="Carga en línea"><svg class="icon"><use href="#lineLoad"/></svg></button>
    <button aria-label="Carga libre"><svg class="icon"><use href="#freeLoad"/></svg></button>
    <button class="split" aria-label="Generar cargas"><svg class="icon"><use href="#genLoad"/></svg></button>
    <span class="grip wide"></span>
    <button aria-label="Mover vista"><svg class="icon"><use href="#pan"/></svg></button>
    <button aria-label="Zoom ventana"><svg class="icon"><use href="#zoomWin"/></svg></button>
    <button aria-label="Zoom todo"><svg class="icon"><use href="#zoomAll"/></svg></button>
    <button aria-label="Isometría"><svg class="icon"><use href="#cube"/></svg></button>
    <button aria-label="Perspectiva"><svg class="icon"><use href="#cubes"/></svg></button>
    <span class="sep"></span>
    <button aria-label="Vista X"><svg class="icon"><use href="#viewX"/><text x="7" y="16" class="glyph big">X</text></svg></button>
    <button aria-label="Vista Y"><svg class="icon"><use href="#viewY"/><text x="3" y="16" class="glyph big">Y</text></svg></button>
    <button aria-label="Vista Z"><svg class="icon"><use href="#viewZ"/><text x="8" y="16" class="glyph big">Z</text></svg></button>
    <button class="split" aria-label="Vista -Y"><svg class="icon"><use href="#viewMY"/><text x="6" y="16" class="glyph big">-Y</text></svg></button>
    <button class="split" aria-label="Visibilidad"><svg class="icon"><use href="#scope"/></svg></button>
    <span class="sep"></span>
    <button class="split" aria-label="Plano de corte"><svg class="icon"><use href="#clip"/></svg></button>
    <span class="grip wide"></span>
    <button class="active" aria-label="Deformación"><svg class="icon"><use href="#frame"/></svg></button>
    <button aria-label="Animación"><svg class="icon"><use href="#camera"/></svg></button>
    <span class="sep"></span>
    <button aria-label="Resultados en barras"><svg class="icon"><use href="#resI"/></svg></button>
    <button aria-label="Resultados en superficies"><svg class="icon"><use href="#resSurf"/></svg></button>
    <button aria-label="Resultados en sólidos"><svg class="icon"><use href="#resSolid"/></svg></button>
    <button aria-label="Reacciones"><svg class="icon"><use href="#resSup"/></svg></button>
    <button aria-label="Secciones de resultados"><svg class="icon"><use href="#resPlane"/></svg></button>
    <button class="split" aria-label="Valores en puntos"><svg class="icon"><use href="#pick"/></svg></button>
    <button aria-label="Diagrama"><svg class="icon"><use href="#wave"/></svg></button>
    <button aria-label="Tabla de resultados"><svg class="icon"><use href="#resTab"/></svg></button>
    <span class="sep"></span>
    <button class="active" aria-label="Panel"></button>
</div>

<main class="workspace">
    <section class="navigator">
        <div class="dock-title">
            <span>Navegador de proyectos - Resultados</span>
            <button aria-label="Fijar"><svg viewBox="0 0 10 10"><path d="M3 1v5M7 1v5M2.500 1.500h5M1 6.500h8M5 7v3M6 1v5" fill="none" stroke="#666"/></svg></button>
            <button aria-label="Cerrar"><svg viewBox="0 0 10 10"><path d="M1 1l8 8M9 1L1 9" stroke="#666"/></svg></button>
        </div>
        <div class="tree-box">
            <ul class="tree">
                <li class="row">
                    <span class="expander">−</span><span class="dots"></span>
                    <input type="checkbox" id="vector" class="partial">
                    <svg class="mode"><use href="#mode"/></svg>
                    <label for="vector" class="selected">Vector propio</label>
                </li>
                <li>
                    <ul class="branch">
                        <li class="row"><span class="dots"></span><input type="radio" name="v" id="u" checked><svg class="mode"><use href="#mode"/></svg><label for="u">u</label></li>
                        <li class="row"><span class="dots"></span><input type="radio" name="v" id="ux"><svg class="mode"><use href="#mode"/></svg><label for="ux">u-X</label></li>
                        <li class="row"><span class="dots"></span><input type="radio" name="v" id="uy"><svg class="mode"><use href="#mode"/></svg><label for="uy">u-Y</label></li>
                        <li class="row"><span class="dots"></span><input type="radio" name="v" id="uz"><svg class="mode"><use href="#mode"/></svg><label for="uz">u-Z</label></li>
                        <li class="row"><span class="dots"></span><input type="radio" name="v" id="px"><svg class="mode"><use href="#mode"/></svg><label for="px">Phi-X</label></li>
                        <li class="row"><span class="dots"></span><input type="radio" name="v" id="py"><svg class="mode"><use href="#mode"/></svg><label for="py">Phi-Y</label></li>
                        <li class="row"><span class="dots"></span><input type="radio" name="v" id="pz"><svg class="mode"><use href="#mode"/></svg><label for="pz">Phi-Z</label></li>
                    </ul>
                </li>
                <li class="row">
                    <span class="expander none"></span><span class="dots"></span>
                    <input type="checkbox" id="secciones">
                    <svg class="mode"><use href="#secc"/></svg>
                    <label for="secciones">Secciones</label>
                </li>
                <li class="row">
                    <span class="expander">+</span><span class="dots"></span>
                    <input type="checkbox" id="valores">
                    <svg class="mode"><use href="#vals"/></svg>
                    <label for="valores">Valores en superficies</label>
                </li>
            </ul>
            <div class="scrollbar">
                <svg viewBox="0 0 15 17"><path d="M4 10l3.500-3.500L11 10" fill="none" stroke="#444" stroke-width="1.800"/></svg>
                <span class="thumb"></span>
                <svg viewBox="0 0 15 17"><path d="M4 7l3.500 3.500L11 7" fill="none" stroke="#444" stroke-width="1.800"/></svg>
            </div>
        </div>
        <div class="tabs">
            <button><svg><use href="#tabData"/></svg>Datos</button>
            <button><svg><use href="#tabShow"/></svg>Mostrar</button>
            <button><svg class="blue"><use href="#micro"/></svg>Vistas</button>
            <button class="current"><svg><use href="#tabRes"/></svg>Resultados</button>
        </div>
    </section>

    <section class="viewport">
        <svg class="model" viewBox="330 101 673 1036" preserveAspectRatio="xMidYMin meet">
            <!-- upper support -->
            <rect x="620" y="154" width="5" height="78" rx="2" fill="#40ff40"/>
            <path d="M629 161l72-13v72l-72 17z" fill="#40fb40"/>
            <rect x="688" y="141" width="5" height="70" rx="2" fill="#00e400" fill-opacity=".75"/>
            <path d="M646 167q6-1 10 3l20 13-13 22-22-15q-11-12 5-23z" fill="#12e812"/>
            <circle cx="646" cy="179" r="12" fill="#0be00b"/>
            <circle cx="684" cy="205" r="19" fill="#1fe01f" fill-opacity=".8"/>
            <path d="M667 192q17-14 33 2" fill="none" stroke="#0aa00a"/>
            <path d="M693 495v237" stroke="#000" stroke-width="2"/>

            <!-- deformed column, one band per colour step -->
            <g stroke="#7c0808" stroke-width="1" stroke-linejoin="round">
                <path d="M671 208L692 202L716 217L694 223Z" fill="#0000a0"/>
                <path d="M672 208l20-6 8 5q1 8-6 16z" fill="#0b7d62" stroke="none"/>
                <path d="M671 208L694 223L716 217L720 253L697 258L674 243Z" fill="#0000a8"/>
                <path d="M674 243L697 258L720 253L723 314L720 358L697 359L674 344L676 303Z" fill="#00f"/>
                <path d="M674 344L697 359L720 358L717 380L695 381L671 366Z" fill="#0000a8"/>
                <path d="M671 366L695 381L717 380L709 425L687 424L663 409Z" fill="#00f"/>
                <path d="M663 409L687 424L709 425L706 440L683 439L660 424Z" fill="#09f"/>
                <path d="M660 424L683 439L706 440L702 456L680 455L656 439Z" fill="#00f5f5"/>
                <path d="M656 439L680 455L702 456L699 471L677 470L653 454Z" fill="#00e68c"/>
                <path d="M653 454L677 470L699 471L696 487L673 486L650 470Z" fill="#0f0"/>
                <path d="M650 470L673 486L696 487L692 503L670 502L646 486Z" fill="#ff0"/>
                <path d="M646 486L670 502L692 503L689 519L667 518L643 502Z" fill="#d2d200"/>
                <path d="M643 502L667 518L689 519L686 541L664 542L639 526Z" fill="#ffa500"/>
                <path d="M639 526L664 542L686 541L682 565L660 566L636 551Z" fill="#f00"/>
                <path d="M636 551L660 566L682 565L680 619L682 673L660 678L636 662L632 606Z" fill="#b90000"/>
                <path d="M636 662L660 678L682 673L686 695L664 702L640 687Z" fill="#f00"/>
                <path d="M640 687L664 702L686 695L690 716L668 724L643 709Z" fill="#ffa500"/>
                <path d="M643 709L668 724L690 716L693 730L671 738L647 724Z" fill="#d2d200"/>
                <path d="M647 724L671 738L693 730L697 744L674 753L650 738Z" fill="#ff0"/>
                <path d="M650 738L674 753L697 744L700 759L678 768L653 753Z" fill="#0f0"/>
                <path d="M653 753L678 768L700 759L703 774L681 782L657 767Z" fill="#00e68c"/>
                <path d="M657 767L681 782L703 774L706 787L684 795L661 781Z" fill="#00f5f5"/>
                <path d="M661 781L684 795L706 787L710 801L688 809L664 795Z" fill="#09f"/>
                <path d="M664 795L688 809L710 801L717 842L695 850L671 835Z" fill="#00f"/>
                <path d="M671 835L695 850L717 842L720 863L698 870L674 854Z" fill="#0000a8"/>
                <path d="M674 854L698 870L720 863L723 904L720 968L697 971L674 955L676 895Z" fill="#00f"/>
            </g>

            <!-- lower support -->
            <path d="M639 1049l38-21 34 7z" fill="#80ff80"/>
            <path d="M711 1035l-4-8 41 34z" fill="#80ff80"/>
            <path d="M639 1049l72-14 37 26-72 14z" fill="#40df40"/>
            <circle cx="693" cy="1016" r="20" fill="#3f3"/>
            <path d="M677 1028l16-9 15 9q-8 9-19 8z" fill="#22e022"/>
            <path d="M674 955L697 971L720 968L717 1005L694 1007L670 991Z" fill="#0000a8" stroke="#7c0808"/>

            <path d="M694 223L697 258L700 318L697 359L687 424L667 518L660 566M660 678L674 753L695 850L700 910L697 971L694 1007" fill="none" stroke="#7c0808" stroke-width="2"/>
            <path d="M660 566L656 619L660 678" fill="none" stroke="#7c0808"/>
            <path d="M671 208L692 202L716 217L694 223Z" fill="none" stroke="#7c0808" stroke-width="2"/>
            <path d="M693 212v10" stroke="#000" stroke-width="2"/>
            <circle cx="693" cy="212" r="2" fill="#7c0808"/>
            <text x="640" y="614" class="value">1.0</text>

            <!-- spring at mid height -->
            <path d="M682 597l8-4 14 2v19l-12 2-10-2z" fill="#30e030" fill-opacity=".6"/>
            <path d="M682 597l8-4 14 2-12 5z" fill="#128a12" fill-opacity=".8"/>
            <path d="M693 597v19" stroke="#1c801c" stroke-width="2"/>
            <path d="M681 607l12-2" stroke="#a33" stroke-dasharray="1 1"/>
            <path d="M695 604l6-1 9 2 2-8 6 3 13-3M725 595l10 7" fill="none" stroke="#1bd81b"/>

            <!-- axis tripods -->
            <g id="axes" fill="none" stroke-width="2">
                <path d="M693 998l-28 5" stroke="#0f0"/>
                <path d="M656 1004l10-4 1 6z" fill="#00a000"/>
                <path d="M693 998l12 9" stroke="#f00"/>
                <path d="M713 1011l-10-2 4-6z" fill="#c00000"/>
                <path d="M693 998v28" stroke="#0000c0"/>
                <path d="M693 1036l-3-10h6z" fill="#0000a0"/>
            </g>
            <text x="646" y="1009" class="axis" fill="#0c0">Y</text>
            <text x="714" y="1017" class="axis" fill="#e00000">X</text>
            <text x="690" y="1047" class="axis" fill="#0000a0">Z</text>
            <use href="#axes" x="-308" y="-5"/>
            <text x="338" y="1005" class="axis" fill="#0a0">Y</text>
            <text x="405" y="1012" class="axis" fill="#e00000">X</text>
            <text x="382" y="1043" class="axis" fill="#222">Z</text>
        </svg>
        <div class="caption top">
            <p>Vector propio - u [-]</p>
            <p>RF-STABILITY CA1 - Análisis de estabilidad</p>
            <p>Vector propio núm. 4&nbsp; -&nbsp; 22.19</p>
        </div>
        <div class="caption bottom">Máx.u: 1.0, Mín. u: 0.0 -</div>
    </section>

    <aside class="panel">
        <div class="panel-title">Panel</div>
        <div class="panel-body">
            <p>Vector propio -</p>
            <p>u [-]</p>
            <div class="legend">
                <svg class="scale" viewBox="0 0 34 188">
                    <path d="M1 1h26v17H1z" fill="#b90000"/>
                    <path d="M1 18h26v17H1z" fill="#f00"/>
                    <path d="M1 35h26v17H1z" fill="#ffa500"/>
                    <path d="M1 52h26v17H1z" fill="#d2d200"/>
                    <path d="M1 69h26v17H1z" fill="#ff0"/>
                    <path d="M1 86h26v17H1z" fill="#0f0"/>
                    <path d="M1 103h26v17H1z" fill="#00e68c"/>
                    <path d="M1 120h26v17H1z" fill="#00f5f5"/>
                    <path d="M1 137h26v17H1z" fill="#09f"/>
                    <path d="M1 154h26v17H1z" fill="#00f"/>
                    <path d="M1 171h26v17H1z" fill="#0000a8"/>
                    <path d="M.5 0v188M26.500 0v188M0 .5h33M0 17.500h33M0 34.500h33M0 51.500h33M0 68.500h33M0 85.500h33M0 102.500h33M0 119.500h33M0 136.500h33M0 153.500h33M0 170.500h33M0 187.500h33" stroke="#000"/>
                </svg>
                <ol>
                    <li>1.0</li>
                    <li>0.9</li>
                    <li>0.8</li>
                    <li>0.7</li>
                    <li>0.6</li>
                    <li>0.5</li>
                    <li>0.5</li>
                    <li>0.4</li>
                    <li>0.3</li>
                    <li>0.2</li>
                    <li>0.1</li>
                    <li>0.0</li>
                </ol>
            </div>
            <dl class="minmax">
                <dt>Máx</dt><dd>:</dd><dd>1.0</dd>
                <dt>Mín</dt><dd>:</dd><dd>0.0</dd>
            </dl>
            <button class="module">RF-STABILITY</button>
            <button class="find" aria-label="Buscar"><svg><use href="#find"/></svg></button>
        </div>
        <div class="tabs">
            <button class="current" aria-label="Colores"><svg><use href="#colors"/></svg></button>
            <button aria-label="Factores"><svg><use href="#scale"/></svg></button>
            <button aria-label="Filtro"><svg><use href="#micro"/></svg></button>
        </div>
    </aside>
</main>

<footer class="status-bar"><span>FORZC</span></footer>

</body>
</html>
```
FILE: styles.css
```
* {
    box-sizing: border-box;
}

body {
    margin: 0;
    min-height: 100vh;
    display: flex;
    flex-direction: column;
    overflow: hidden;
    background: #d0d4dd;
    font-family: "Open Sans", "Noto Sans", sans-serif;
    font-size: 11px;
    color: #000;
}

ul, ol, dl, dd, p {
    margin: 0;
    padding: 0;
    list-style: none;
}

button {
    padding: 0;
    border: 0;
    background: none;
    font: inherit;
    color: inherit;
}

.sprite {
    position: absolute;
    width: 0;
    height: 0;
}

.icon {
    display: block;
    flex: none;
    width: 18px;
    height: 18px;
    overflow: visible;
}

/* letters inside icons */
.glyph {
    font-family: "Liberation Serif", serif;
    font-size: 9px;
    fill: #333;
}

.glyph.bold {
    font-weight: bold;
}

.glyph.pale {
    fill: #888;
}

.glyph.big {
    font-size: 11px;
}

.glyph.info {
    font-size: 13px;
    font-weight: bold;
    fill: #fff;
}

.logo {
    font-family: "Liberation Sans", Arial, sans-serif;
    font-size: 13px;
    font-weight: bold;
    fill: #f5c426;
    stroke: #6b5300;
    stroke-width: 1px;
    paint-order: stroke;
}

/* title and menu */
.title-bar {
    display: flex;
    align-items: center;
    gap: 3px;
    height: 23px;
    padding-left: 2px;
    background: #fff;
}

.menu-bar {
    display: flex;
    align-items: center;
    height: 24px;
    gap: 15px;
}

.menu-bar .grip {
    margin-right: -15px;
}

.menu-bar a {
    color: #565b66;
    text-decoration: none;
    white-space: nowrap;
}

.bridge {
    width: 17px;
    height: 14px;
    margin-right: -6px;
}

/* toolbars */
.toolbar {
    display: flex;
    align-items: center;
    height: 26px;
    border-bottom: 1px solid #a8adb8;
    background: linear-gradient(#f0f3f9, #dde1ea 60%, #cfd4de);
}

.toolbar button {
    display: flex;
    align-items: center;
    justify-content: center;
    flex: none;
    width: 22px;
    height: 22px;
}

.toolbar .split {
    width: 35px;
    justify-content: flex-start;
    padding-left: 4px;
}

.toolbar .split::after {
    content: "";
    margin-left: 5px;
    border: 3px solid transparent;
    border-top-color: #707682;
    border-bottom: 0;
}

.toolbar .active {
    border: 1px solid #b99a63;
    background: linear-gradient(#fcd9a2, #ffbe62 50%, #ffe59b);
}

.grip {
    flex: none;
    width: 10px;
    height: 15px;
    background: repeating-linear-gradient(#aaafba 0 2px, transparent 2px 4px) 5px 0 / 2px 100% no-repeat;
}

.wide {
    width: 12px;
}

.sep {
    flex: none;
    width: 8px;
    height: 16px;
    background: linear-gradient(#b2b7c2, #b2b7c2) 4px 0 / 1px 100% no-repeat;
}

.case {
    flex: none;
    width: 217px;
    height: 18px;
    margin: 0 1px 0 1px;
    padding: 0 16px 0 3px;
    appearance: none;
    border: 1px solid #fff;
    border-radius: 0;
    background: linear-gradient(#6d7380, #6d7380) no-repeat 206px 7px / 5px 1px,
        linear-gradient(#6d7380, #6d7380) no-repeat 207px 8px / 3px 1px,
        linear-gradient(#6d7380, #6d7380) no-repeat 208px 9px / 1px 1px,
        linear-gradient(#dfe3eb, #dfe3eb) no-repeat right / 14px 100%, #fff;
    font-family: "DejaVu Sans Condensed", "DejaVu Sans", sans-serif;
    font-size: 11px;
    color: #000;
}

/* workspace */
.workspace {
    flex: 1;
    display: flex;
    min-height: 0;
    border-top: 1px solid #8b909a;
}

.navigator {
    display: flex;
    flex-direction: column;
    flex: none;
    width: 324px;
    border-right: 1px solid #a3a9b5;
}

.dock-title {
    display: flex;
    align-items: center;
    gap: 7px;
    height: 19px;
    padding: 0 4px 1px;
    background: #e6ebf6;
    color: #454b57;
}

.dock-title span {
    flex: 1;
}

.dock-title svg {
    display: block;
    width: 10px;
    height: 10px;
}

.tree-box {
    flex: 1;
    display: flex;
    justify-content: space-between;
    padding-right: 3px;
    border: 1px solid #9298a4;
    border-right: 0;
    background: linear-gradient(#e6ebf6, #e6ebf6) right / 3px 100% no-repeat, #fcfbf3;
}

.tree {
    padding: 2px 0 0 9px;
    background: repeating-linear-gradient(#888 0 1px, transparent 1px 2px) 13px 12px / 1px 162px no-repeat;
    align-self: flex-start;
}

.row {
    display: flex;
    align-items: center;
    height: 18px;
}

.branch {
    padding-left: 24px;
    background: repeating-linear-gradient(#888 0 1px, transparent 1px 2px) 24px 0 / 1px 118px no-repeat;
}

.expander {
    width: 9px;
    height: 9px;
    border: 1px solid #8b93a3;
    background: #fff;
    font-size: 9px;
    line-height: 7px;
    text-align: center;
    color: #2b46a5;
}

.expander.none {
    visibility: hidden;
}

.dots {
    width: 9px;
    height: 1px;
    background: repeating-linear-gradient(90deg, #888 0 1px, transparent 1px 2px);
}

.branch .dots {
    width: 14px;
}

.row input {
    appearance: none;
    flex: none;
    width: 13px;
    height: 13px;
    margin: 0 3px 0 0;
    border: 1px solid #555;
    background: linear-gradient(135deg, #dfe1e6, #fff);
}

.row input[type="radio"] {
    border-radius: 50%;
}

.row input[type="radio"]:checked {
    background: radial-gradient(#111 0 2px, #fff 3px);
}

.row .partial {
    background: #9a9a9a;
    box-shadow: inset 0 0 0 2px #eee;
}

.mode {
    width: 16px;
    height: 14px;
    margin-right: 3px;
}

.row label {
    padding: 0 2px;
    line-height: 16px;
}

.row .selected {
    background: #0078d7;
    color: #fff;
    outline: 1px dotted #f08a20;
    outline-offset: -1px;
}

.scrollbar {
    display: flex;
    flex-direction: column;
    width: 15px;
    background: #f0f0f0;
}

.scrollbar svg {
    width: 15px;
    height: 18px;
}

.thumb {
    height: 18px;
    margin-bottom: auto;
    background: #cdcdcd;
}

.tabs {
    display: flex;
    align-items: flex-start;
    gap: 5px;
    height: 23px;
    padding-left: 3px;
    color: #4c5260;
}

.tabs button {
    display: flex;
    align-items: center;
    gap: 2px;
    height: 20px;
    padding: 0 3px;
}

.tabs svg {
    width: 16px;
    height: 16px;
}

.tabs .blue {
    color: #3c66c6;
}

.tabs .current {
    border: 1px solid #bfe6e6;
    border-top: 0;
    background: #f7fafc;
}

.viewport {
    position: relative;
    flex: 1;
    min-width: 0;
    margin: 0 5px 0 5px;
    border: 1px solid #fff;
    border-left-color: #5e636c;
    border-top-color: #5e636c;
    background: #fff;
    font-family: "Liberation Sans", Arial, sans-serif;
}

.model {
    display: block;
    width: 100%;
    height: 100%;
}

.value {
    font-size: 9px;
    fill: #9a9a10;
}

.axis {
    font-size: 9px;
}

.caption {
    position: absolute;
    left: 4px;
    line-height: 14px;
}

.caption.top {
    top: 5px;
}

.caption.bottom {
    bottom: 6px;
}

/* right panel */
.panel {
    display: flex;
    flex-direction: column;
    flex: none;
    width: 200px;
    border-left: 1px solid #a6adbb;
}

.panel-title {
    height: 19px;
    padding-left: 3px;
    line-height: 18px;
    background: #b9c0ca;
    border-bottom: 1px solid #a6adbb;
    color: #454b57;
}

.panel-body {
    flex: 1;
    display: flex;
    flex-direction: column;
    align-items: flex-start;
    padding: 5px;
    border-bottom: 1px solid #6b7079;
    background: #f0f0f0;
    font-family: "DejaVu Sans Condensed", "DejaVu Sans", sans-serif;
    line-height: 17px;
}

.legend {
    display: flex;
    width: 146px;
    height: 215px;
    padding: 10px 0 0 46px;
    border: 1px solid #fff;
    border-top-color: #999;
    border-left-color: #999;
    background: #faf7ef;
}

.scale {
    width: 34px;
    height: 188px;
}

.legend ol {
    margin: -8px 0 0 3px;
    font-family: "Liberation Sans", Arial, sans-serif;
    font-size: 12px;
}

.minmax {
    display: grid;
    grid-template-columns: 25px 14px auto;
    justify-content: start;
    width: 146px;
    margin-top: 9px;
    padding-left: 47px;
    border: 1px solid #a9a9ee;
    border-top-color: #d8e4f2;
    border-left-color: #d8e4f2;
    background: #f0f4fa;
}

.panel-body .module {
    width: 138px;
    height: 23px;
    margin: 20px 0 0 4px;
    border: 1px solid #adadad;
    background: #e1e1e1;
}

.find {
    width: 25px;
    height: 21px;
    margin: 94px 0 0 127px;
    border: 1px solid #adadad;
    background: #e6e6e6;
}

.find svg {
    display: block;
    width: 18px;
    height: 18px;
    margin: auto;
}

.panel .tabs button {
    width: 24px;
    justify-content: center;
}

/* status bar */
.status-bar {
    display: flex;
    justify-content: flex-end;
    height: 21px;
    padding-top: 2px;
    background: linear-gradient(#d8dce2, #a7adb4 50%, #bcc1c8);
    border-top: 1px solid #9a9fa8;
    overflow: hidden;
}

.status-bar span {
    width: 39px;
    padding-left: 1px;
    border: 1px solid #111;
    border-right: 0;
    font-size: 12px;
    line-height: 16px;
    color: #333;
}
```
